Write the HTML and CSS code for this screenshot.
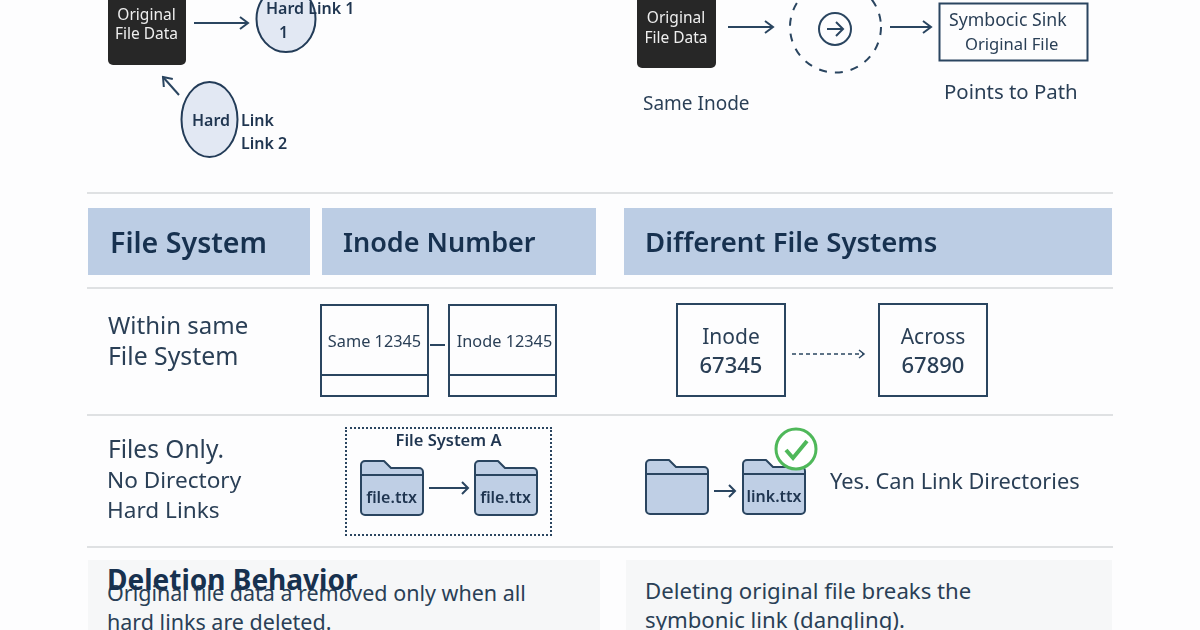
FILE: index.html
```html
<!DOCTYPE html>
<html lang="en">
<head>
<meta charset="utf-8">
<title>Hard Links and Symbolic Links</title>
<link rel="stylesheet" href="styles.css">
</head>
<body>
<main class="page">
  <section class="intro">
    <svg class="canvas" width="1026" height="192" viewBox="87 0 1026 192">
      <defs>
        <marker id="head" viewBox="0 0 12 14" refX="10" refY="7" markerWidth="12" markerHeight="14" markerUnits="userSpaceOnUse" orient="auto">
          <path class="head" d="M2 1l8 6-8 6"/>
        </marker>
      </defs>
      <path class="blk" d="M108 -6h78v66a5 5 0 0 1-5 5h-68a5 5 0 0 1-5-5z"/>
      <text class="t-white" x="146.500" y="19.500">Original</text>
      <text class="t-white" x="146.500" y="39">File Data</text>
      <line class="ln" x1="194" y1="23" x2="248" y2="23" marker-end="url(#head)"/>
      <ellipse class="oval" cx="286" cy="19" rx="29.500" ry="33"/>
      <text class="t-sb" x="266" y="14">Hard Link 1</text>
      <text class="t-sb" x="279" y="38">1</text>
      <ellipse class="oval" cx="209.500" cy="119.500" rx="28" ry="37.500"/>
      <text class="t-sb" x="192" y="126">Hard</text>
      <text class="t-sb" x="241" y="126">Link</text>
      <text class="t-sb" x="241" y="149">Link 2</text>
      <line class="ln" x1="179" y1="95" x2="163" y2="77" marker-end="url(#head)"/>

      <path class="blk" d="M637 -6h79v69a5 5 0 0 1-5 5h-69a5 5 0 0 1-5-5z"/>
      <text class="t-white" x="676" y="23">Original</text>
      <text class="t-white" x="676" y="43">File Data</text>
      <line class="ln" x1="728" y1="27" x2="773" y2="27" marker-end="url(#head)"/>
      <circle class="dash" cx="835.500" cy="27" r="45.500"/>
      <circle class="ln" cx="835" cy="29" r="16"/>
      <line class="ln" x1="827" y1="29" x2="843" y2="29"/>
      <path class="ln" d="M836 22l7 7-7 7"/>
      <line class="ln" x1="890" y1="27" x2="931" y2="27" marker-end="url(#head)"/>
      <rect class="ln" x="939.500" y="3.500" width="148" height="57"/>
      <text class="t-reg" x="949" y="26">Symbocic Sink</text>
      <text class="t-reg t-small" x="965" y="50">Original File</text>
      <text class="t-cap" x="944" y="99">Points to Path</text>
      <text class="t-cap-s" x="643" y="110">Same Inode</text>
    </svg>
  </section>

  <section class="heads">
    <h2 class="head-cell head-a">File System</h2>
    <h2 class="head-cell head-b">Inode Number</h2>
    <h2 class="head-cell head-c">Different File Systems</h2>
  </section>

  <section class="row row-inode">
    <p class="label">Within same<br><span class="wide">File System</span></p>
    <div class="pair">
      <div class="slot">
        <span class="slot-text">Same 12345</span>
        <span class="slot-foot"></span>
      </div>
      <span class="link"></span>
      <div class="slot">
        <span class="slot-text slot-shift">Inode 12345</span>
        <span class="slot-foot"></span>
      </div>
    </div>
    <div class="across">
      <div class="inode"><span>Inode</span><b>67345</b></div>
      <svg class="dots" width="92" height="14" viewBox="0 0 92 14">
        <line class="dot-line" x1="0" y1="7" x2="71" y2="7"/>
        <path class="ln thin" d="M67 3l5 4-5 4"/>
      </svg>
      <div class="inode"><span>Across</span><b>67890</b></div>
    </div>
  </section>

  <section class="row row-dirs">
    <p class="label label-dirs"><span class="first">Files Only.</span><br>No Directory<br>Hard Links</p>
    <div class="fs-box">
      <h3 class="fs-title">File System A</h3>
      <div class="fs-items">
        <div class="folder">
          <svg class="folder-art" width="64" height="56" viewBox="0 0 64 56"><path class="f-fill" d="M1 5a4 4 0 0 1 4-4h19l7 7h28a4 4 0 0 1 4 4v39a4 4 0 0 1-4 4H5a4 4 0 0 1-4-4z"/><path class="f-line" d="M1 15h62"/></svg>
          <span class="folder-name">file.ttx</span>
        </div>
        <svg width="42" height="14" viewBox="0 0 42 14"><path class="ln" d="M1 7h39M34 1l6 6-6 6"/></svg>
        <div class="folder">
          <svg class="folder-art" width="64" height="56" viewBox="0 0 64 56"><path class="f-fill" d="M1 5a4 4 0 0 1 4-4h19l7 7h28a4 4 0 0 1 4 4v39a4 4 0 0 1-4 4H5a4 4 0 0 1-4-4z"/><path class="f-line" d="M1 15h62"/></svg>
          <span class="folder-name">file.ttx</span>
        </div>
      </div>
    </div>
    <div class="dir-links">
      <div class="folder">
        <svg class="folder-art" width="64" height="56" viewBox="0 0 64 56"><path class="f-fill" d="M1 5a4 4 0 0 1 4-4h19l7 7h28a4 4 0 0 1 4 4v39a4 4 0 0 1-4 4H5a4 4 0 0 1-4-4z"/><path class="f-line" d="M1 15h62"/></svg>
      </div>
      <svg width="23" height="14" viewBox="0 0 23 14"><path class="ln" d="M0 7h21M15 1l6 6-6 6"/></svg>
      <div class="folder">
        <svg class="folder-art" width="64" height="56" viewBox="0 0 64 56"><path class="f-fill" d="M1 5a4 4 0 0 1 4-4h19l7 7h28a4 4 0 0 1 4 4v39a4 4 0 0 1-4 4H5a4 4 0 0 1-4-4z"/><path class="f-line" d="M1 15h62"/></svg>
        <span class="folder-name">link.ttx</span>
        <svg class="check" width="44" height="44" viewBox="0 0 44 44"><circle class="check-ring" cx="22" cy="22" r="20"/><path class="check-mark" d="M12 23l7 8 14-17"/></svg>
      </div>
      <p class="yes">Yes. Can Link Directories</p>
    </div>
  </section>

  <section class="notes">
    <div class="note note-a">
      <h2 class="note-title">Deletion Behavior</h2>
      <p class="note-text">Original file data a removed only when all<br>hard links are deleted.</p>
    </div>
    <div class="note note-b">
      <p class="note-text">Deleting original file breaks the<br>symbonic link (dangling).</p>
    </div>
  </section>
</main>
</body>
</html>
```
FILE: styles.css
```css
* { box-sizing: border-box; }
html, body { margin: 0; height: 630px; overflow: hidden; background: #fdfdfe; }
body { font-family: "Noto Sans", "Open Sans", sans-serif; color: #1f3550; }
h2, h3, p { margin: 0; }

.page { width: 1200px; height: 630px; padding: 0 87px; overflow: hidden; filter: blur(0.35px); }

/* Top diagram */
.intro { height: 194px; border-bottom: 2px solid #dfe1e3; }
.canvas { display: block; overflow: hidden; }
.blk { fill: #272727; }
.ln { fill: none; stroke: #2a4560; stroke-width: 2; }
.thin { stroke-width: 1.500; }
.head { fill: none; stroke: #2a4560; stroke-width: 2; }
.dash { fill: none; stroke: #2a4560; stroke-width: 2; stroke-dasharray: 8 8; }
.oval { fill: #e2e8f3; stroke: #233c58; stroke-width: 2; }
text { font-family: "Noto Sans", "Open Sans", sans-serif; fill: #1f3550; }
.t-white { font-size: 15.500px; fill: #eeeeee; text-anchor: middle; }
.t-sb { font-size: 16px; font-weight: 600; }
.t-reg { font-size: 17.700px; fill: #2a3f56; }
.t-small { font-size: 16.600px; }
.t-cap { font-size: 20.400px; fill: #2a3f56; }
.t-cap-s { font-size: 19px; fill: #2a3f56; }

/* Header row */
.heads {
  height: 95px;
  padding: 14px 1px 12px;
  display: grid;
  grid-template-columns: 222px 274px 460px;
  column-gap: 12px;
  border-bottom: 2px solid #dfe1e3;
}
.head-c { width: 488px; margin-left: 16px; }
.head-cell {
  display: flex;
  align-items: center;
  padding-left: 21px;
  background: #bccde4;
  font-size: 27.500px;
  font-weight: 600;
  color: #17314f;
}
.head-a { padding-left: 22px; font-size: 28.600px; }
.head-b { font-size: 27px; }

/* Body rows */
.row { display: grid; border-bottom: 2px solid #dfe1e3; }
.row-inode { height: 127px; padding-bottom: 3px; grid-template-columns: 233px 356px 1fr; align-items: center; }
.row-dirs { height: 132px; grid-template-columns: 258px 300px 1fr; align-items: center; }
.label { padding-left: 21px; margin-bottom: 20px; font-size: 24px; line-height: 31px; color: #2a3f56; }
.label .wide { font-size: 24.800px; }
.label-dirs { padding-left: 20px; margin-bottom: 3px; font-size: 22.600px; line-height: 30px; }
.label-dirs .first { margin-left: 1px; font-size: 24.500px; }

.pair { display: flex; align-items: center; }
.slot {
  width: 109px;
  height: 93px;
  display: flex;
  flex-direction: column;
  border: 2px solid #2a4560;
}
.slot-text { flex: 1; display: flex; align-items: center; justify-content: center; padding-top: 3px; font-size: 16.300px; color: #2a3f56; white-space: nowrap; }
.slot-shift { padding-left: 4px; }
.slot-foot { height: 21px; border-top: 2px solid #2a4560; }
.link { width: 15px; height: 2px; margin: 0 3px 11px 1px; background: #2a4560; }

.across { display: flex; align-items: center; }
.inode {
  width: 110px;
  height: 94px;
  display: flex;
  flex-direction: column;
  align-items: center;
  justify-content: center;
  border: 2px solid #2a4560;
  font-size: 21px;
  line-height: 28px;
  color: #2a3f56;
}
.inode b { font-size: 22px; font-weight: 500; }
.dots { flex: none; margin: 7px 0 0 6px; }
.dot-line { stroke: #2a4560; stroke-width: 1.500; stroke-dasharray: 4 3; }
.across .inode:last-child { margin-left: -6px; }

.fs-box {
  width: 207px;
  height: 109px;
  border: 2px dotted #2a4560;
  display: flex;
  flex-direction: column;
  align-items: center;
}
.fs-title { font-size: 16.500px; font-weight: 600; line-height: 22px; color: #1f3550; }
.fs-items { display: flex; align-items: center; gap: 4px; margin-top: 9px; }
.folder { position: relative; width: 64px; height: 56px; flex: none; }
.folder-art { display: block; }
.f-fill { fill: #bfcfe5; stroke: #2a4560; stroke-width: 2; stroke-linejoin: round; }
.f-line { fill: none; stroke: #2a4560; stroke-width: 2; }
.folder-name {
  position: absolute;
  left: 0;
  right: 0;
  top: 26px;
  text-align: center;
  font-size: 16px;
  line-height: 22px;
  font-weight: 600;
  color: #1f3550;
}
.check { position: absolute; left: 32px; top: -32px; }
.check-ring { fill: #ffffff; stroke: #4fb85a; stroke-width: 3; }
.check-mark { fill: none; stroke: #4fb85a; stroke-width: 4; }

.dir-links { display: flex; align-items: center; gap: 5px; }
.dir-links .folder { margin-top: 12px; }
.dir-links > svg { margin-top: 19px; }
.yes { margin: -2px 0 0 19px; font-size: 21.800px; white-space: nowrap; color: #2a3f56; }

/* Bottom notes */
.notes {
  height: 82px;
  padding: 12px 1px 0;
  display: grid;
  grid-template-columns: 512px 486px;
  column-gap: 26px;
}
.note { position: relative; padding: 18px 20px 0 19px; background: #f6f7f8; }
.note-b { padding-top: 16px; }
.note-title {
  position: absolute;
  left: 19px;
  top: 0;
  font-size: 28px;
  line-height: 38px;
  font-weight: 700;
  color: #17314f;
  white-space: nowrap;
}
.note-text { font-size: 21.500px; line-height: 29px; color: #2a3f56; white-space: nowrap; }
.note-b .note-text { font-size: 22.200px; }
```
